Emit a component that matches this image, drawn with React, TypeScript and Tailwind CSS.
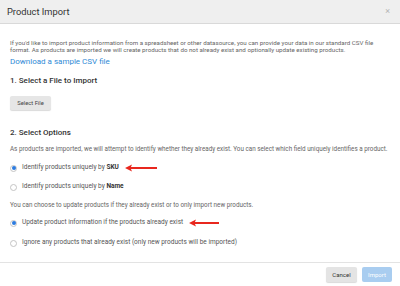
import React from "react";

const Arrow = ({ w }: { w: number }) => (
  <svg width={w} height={8} viewBox={`0 0 ${w} 8`} className="shrink-0">
    <line x1={3} y1={4} x2={w} y2={4} stroke="#e8271e" strokeWidth={2} />
    <path d="M0 4 L7 0.5 L5.5 4 L7 7.5 Z" fill="#e8271e" />
  </svg>
);

const Radio = ({ checked }: { checked?: boolean }) => (
  <span className="w-[7px] h-[7px] rounded-full border-[0.6px] border-[#c4c4c4] bg-white flex items-center justify-center shrink-0">
    {checked && <span className="w-[4px] h-[4px] rounded-full bg-[#2b7be0]" />}
  </span>
);

export default function App() {
  return (
    <div className="w-[400px] h-[286px] bg-white flex flex-col overflow-hidden" style={{ fontFamily: "Roboto, 'Liberation Sans', sans-serif" }}>
      <div className="h-[24px] bg-[#efefef] border-b border-[#d9d9d9] flex items-center justify-between pl-[7px] pr-[10px] shrink-0">
        <span className="text-[9.3px] text-[#333]">Product Import</span>
        <span className="text-[9px] text-[#b5b5b5] leading-none">×</span>
      </div>
      <div className="flex-1 pl-[10px] pr-[10px] pt-[16px] flex flex-col">
        <p className="text-[6.2px] leading-[6.5px] text-[#666] w-[378px]">
          If you'd like to import product information from a spreadsheet or other datasource, you can provide your data in our standard CSV file format. As products are imported we will create products that do not already exist and optionally update existing products.
        </p>
        <a className="mt-[4px] text-[8px] leading-[10px] text-[#2f8ad6]">Download a sample CSV file</a>
        <div className="mt-[9px] text-[8px] leading-[10px] font-medium text-[#333]">1. Select a File to Import</div>
        <div className="mt-[10px]">
          <button className="h-[14px] w-[41px] rounded-[2px] bg-[#e6e6e6] text-[5.8px] text-[#444] shadow-[0_1px_1px_rgba(0,0,0,0.15)] flex items-center justify-center">Select File</button>
        </div>
        <div className="mt-[18px] text-[8px] leading-[10px] font-medium text-[#333]">2. Select Options</div>
        <p className="mt-[7.75px] text-[6.3px] leading-[6.5px] text-[#666] whitespace-nowrap">
          As products are imported, we will attempt to identify whether they already exist. You can select which field uniquely identifies a product.
        </p>
        <div className="mt-[10.75px] h-[10px] flex items-center gap-[5px] text-[6.5px] text-[#555]">
          <Radio checked />
          <span>Identify products uniquely by <b className="font-bold text-[#333]">SKU</b></span>
          <span className="ml-[1px]"><Arrow w={32} /></span>
        </div>
        <div className="mt-[9px] h-[10px] flex items-center gap-[5px] text-[6.5px] text-[#555]">
          <Radio />
          <span>Identify products uniquely by <b className="font-bold text-[#333]">Name</b></span>
        </div>
        <p className="mt-[9.75px] text-[6.3px] leading-[6.5px] text-[#666]">
          You can choose to update products if they already exist or to only import new products.
        </p>
        <div className="mt-[9.75px] h-[10px] flex items-center gap-[5px] text-[6.5px] text-[#555]">
          <Radio checked />
          <span>Update product information if the products already exist</span>
          <span className="ml-[1px]"><Arrow w={30} /></span>
        </div>
        <div className="mt-[10px] h-[10px] flex items-center gap-[5px] text-[6.5px] text-[#555]">
          <Radio />
          <span>Ignore any products that already exist (only new products will be imported)</span>
        </div>
      </div>
      <div className="h-[24px] border-t border-[#e3e3e3] flex justify-end items-start pt-[4px] pr-[8px] gap-[5px] shrink-0">
        <button className="h-[15px] w-[31px] rounded-[2px] bg-[#e4e4e4] text-[6px] text-[#333] shadow-[0_1px_1px_rgba(0,0,0,0.15)]">Cancel</button>
        <button className="h-[15px] w-[30px] rounded-[2px] bg-[#a9cdf0] text-[6px] text-white">Import</button>
      </div>
    </div>
  );
}
